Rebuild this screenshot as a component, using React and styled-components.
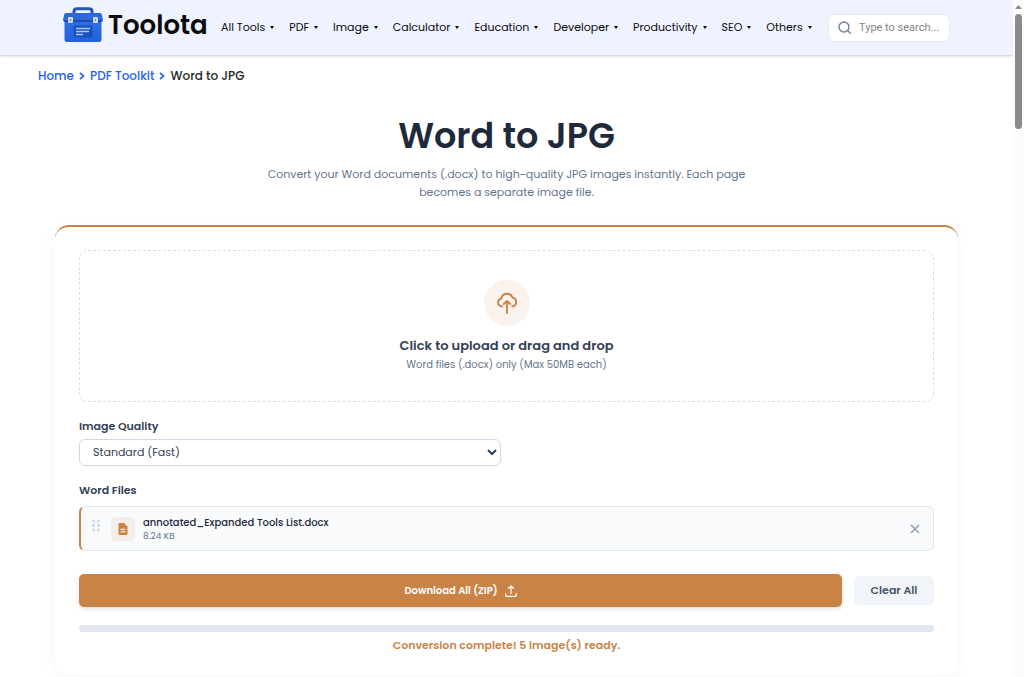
import React from "react";
import styled, { createGlobalStyle } from "styled-components";

const GlobalStyle = createGlobalStyle`
  * {
    box-sizing: border-box;
  }
  html {
    scrollbar-width: none;
  }
  body {
    margin: 0;
    background: #ffffff;
    color: #1e293b;
    font-family: Poppins, Inter, "Liberation Sans", sans-serif;
  }
  button, select {
    font-family: inherit;
  }
  h1, p {
    margin: 0;
  }
`;

const Shell = styled.div`
  display: grid;
  grid-template-columns: minmax(0, 1fr) 11px;
  min-height: 100vh;
`;

const Rail = styled.div`
  position: sticky;
  top: 0;
  height: 100vh;
  padding-top: 5px;
  display: flex;
  flex-direction: column;
  align-items: center;
  gap: 5px;
  background: #fcfcfc;
`;

const Thumb = styled.span`
  width: 7px;
  height: 115px;
  border-radius: 4px;
  background: #8b8b8b;
`;

const Header = styled.header`
  height: 56px;
  padding: 0 63px;
  display: flex;
  align-items: center;
  justify-content: space-between;
  background: #eff3ff;
  border-bottom: 1px solid #d5d9e4;
  box-shadow: 0 1px 2px rgba(0, 0, 0, 0.1);
`;

const Logo = styled.a`
  display: flex;
  align-items: center;
  gap: 5px;
  height: 50px;
  align-self: flex-start;
  color: #0b0b0b;
  font-size: 26px;
  font-weight: 600;
  line-height: 32px;
  text-decoration: none;
`;

const Nav = styled.nav`
  display: flex;
  gap: 15px;
  padding: 0 3px 1px 0;
`;

const NavButton = styled.button`
  display: flex;
  align-items: center;
  gap: 5px;
  padding: 0;
  border: none;
  background: none;
  color: #0a0a0a;
  font-size: 11px;
  line-height: 16px;

  &::after {
    content: "";
    border: 2px solid transparent;
    border-top: 3px solid #0a0a0a;
    border-bottom: 0;
  }
`;

const Search = styled.label`
  display: flex;
  align-items: center;
  gap: 8px;
  width: 122px;
  height: 28px;
  padding: 0 9px;
  border: 1px solid #e6eaf5;
  border-radius: 7px;
  background: #ffffff;

  svg {
    flex: none;
  }

  input {
    width: 100%;
    min-width: 0;
    padding: 0;
    border: none;
    outline: none;
    background: none;
    font-family: Roboto, sans-serif;
    font-size: 11px;
  }

  input::placeholder {
    color: #858585;
  }
`;

const Breadcrumb = styled.nav`
  display: flex;
  align-items: center;
  gap: 5px;
  padding: 11px 38px 0;
  font-size: 12px;
  font-weight: 500;
  line-height: 18px;
  color: #262626;

  a {
    color: #2563eb;
    text-decoration: none;
  }
`;

const Intro = styled.section`
  padding: 27px 55px 0;
  text-align: center;
`;

const Title = styled.h1`
  color: #1e293b;
  font-size: 35px;
  font-weight: 600;
  line-height: 48px;
`;

const Lead = styled.p`
  max-width: 500px;
  margin: 5px auto 0;
  color: #64748b;
  font-size: 11px;
  line-height: 18px;
`;

const Card = styled.section`
  margin: 24px 55px 2px;
  padding: 23px 24px 21px;
  border-top: 2px solid #c98346;
  border-radius: 14px;
  background: #ffffff;
  box-shadow: 0 4px 18px rgba(0, 0, 0, 0.04);
`;

const DropZone = styled.button`
  display: flex;
  flex-direction: column;
  align-items: center;
  width: 100%;
  height: 152px;
  padding: 29px 16px 0;
  border: 1px dashed #d8dfe8;
  border-radius: 9px;
  background: #ffffff;
`;

const UploadBadge = styled.span`
  display: grid;
  place-items: center;
  flex: none;
  width: 46px;
  height: 46px;
  margin-bottom: 10px;
  border-radius: 50%;
  background: #faf3ed;
`;

const DropTitle = styled.span`
  color: #334155;
  font-size: 13px;
  font-weight: 600;
  line-height: 20px;
`;

const DropHint = styled.span`
  color: #64748b;
  font-size: 10px;
  line-height: 18px;
`;

const Options = styled.div`
  display: grid;
  grid-template-columns: 1fr 1fr;
  gap: 12px;
  margin-top: 16px;
`;

const Label = styled.label`
  display: block;
  color: #334155;
  font-size: 11px;
  font-weight: 600;
  line-height: 16px;
`;

const Select = styled.select`
  width: 100%;
  height: 27px;
  margin-top: 5px;
  padding: 0 0 1px 9px;
  border: 1px solid #cfd9e5;
  border-radius: 6px;
  background: #ffffff;
  color: #334155;
  font-size: 11px;
`;

const FilesLabel = styled(Label)`
  margin-top: 16px;
`;

const FileRow = styled.div`
  display: flex;
  align-items: center;
  height: 45px;
  margin-top: 8px;
  padding: 0 13px 0 11px;
  border: 1px solid #e2e8f0;
  border-left: 2px solid #c98346;
  border-radius: 6px;
  background: #f8fafc;
`;

const Grip = styled.span`
  display: flex;
  padding-bottom: 6px;
`;

const FileBadge = styled.span`
  display: grid;
  place-items: center;
  width: 24px;
  height: 24px;
  margin: 0 8px 0 11px;
  border-radius: 5px;
  background: #f3eee9;
`;

const FileInfo = styled.div`
  flex: 1;
`;

const FileName = styled.p`
  color: #1e293b;
  font-size: 10px;
  font-weight: 500;
  line-height: 14px;
`;

const FileSize = styled.p`
  color: #64748b;
  font-size: 9px;
  line-height: 12px;
`;

const RemoveButton = styled.button`
  display: flex;
  padding: 0;
  border: none;
  background: none;
`;

const Actions = styled.div`
  display: flex;
  align-items: center;
  gap: 12px;
  margin-top: 23px;
`;

const Button = styled.button`
  display: flex;
  align-items: center;
  justify-content: center;
  gap: 7px;
  flex: ${(props) => (props.$primary ? "1" : "0 0 80px")};
  height: ${(props) => (props.$primary ? "33px" : "29px")};
  padding: 0;
  border: none;
  border-radius: 5px;
  background: ${(props) => (props.$primary ? "#c98346" : "#f1f5f9")};
  box-shadow: ${(props) =>
    props.$primary ? "0 2px 4px rgba(0, 0, 0, 0.12)" : "none"};
  color: ${(props) => (props.$primary ? "#ffffff" : "#475569")};
  font-size: ${(props) => (props.$primary ? "10px" : "11px")};
  font-weight: 600;
`;

const Progress = styled.div`
  height: 7px;
  margin-top: 18px;
  border-radius: 4px;
  background: #e2e8f0;
`;

const Status = styled.p`
  margin-top: 4px;
  color: #c98346;
  font-size: 11px;
  font-weight: 600;
  line-height: 18px;
  text-align: center;
`;

const menus = [
  "All Tools",
  "PDF",
  "Image",
  "Calculator",
  "Education",
  "Developer",
  "Productivity",
  "SEO",
  "Others",
];

const ToolboxIcon = () => (
  <svg width="40" height="36" viewBox="0 0 40 36" aria-hidden="true">
    <defs>
      <linearGradient id="box" x1="0" y1="0" x2="0" y2="1">
        <stop offset="0" stopColor="#2f6fe6" />
        <stop offset="1" stopColor="#2360dc" />
      </linearGradient>
    </defs>
    <path
      d="M11 8V4.500Q11 1.800 14 1.800H26Q29 1.800 29 4.500V8"
      fill="none"
      stroke="#2355b8"
      strokeWidth="3"
    />
    <rect x="1.500" y="13" width="37" height="22" rx="2.500" fill="url(#box)" />
    <path d="M3 6H37Q38.500 6 39 8L40 13Q40 14.500 38.500 14.500H1.500Q0 14.500 0 13L1 8Q1.500 6 3 6Z" fill="#2c68dc" />
    <path d="M1 13H39V15H1Z" fill="#1c4bb2" />
    <rect x="10.500" y="18.500" width="19" height="12" rx="2" fill="#1b4fc0" />
    <path d="M13 21.500H27M13 24.500H26M13 27.500H20" stroke="#a9c9ff" strokeWidth="1.300" />
    <rect x="5" y="10" width="5" height="6" rx="1" fill="#d5d9df" />
    <rect x="30" y="10" width="5" height="6" rx="1" fill="#d5d9df" />
    <path d="M7.500 12V14M32.500 12V14" stroke="#737c8c" strokeWidth="1.200" />
  </svg>
);

const SearchIcon = () => (
  <svg width="13" height="13" viewBox="0 0 13 13" fill="none" stroke="#71829d" strokeWidth="1.400" aria-hidden="true">
    <circle cx="6" cy="6" r="5" />
    <path d="M9.600 9.600L12.300 12.300" strokeLinecap="round" />
  </svg>
);

const Chevron = () => (
  <svg width="6" height="8" viewBox="0 0 6 8" fill="none" stroke="#2563eb" strokeWidth="1.700" aria-hidden="true">
    <path d="M1 0.800L4.500 4L1 7.200" />
  </svg>
);

const CloudIcon = () => (
  <svg width="20" height="22" viewBox="0 0 20 22" fill="none" stroke="#c98346" strokeWidth="1.900" strokeLinecap="round" strokeLinejoin="round" aria-hidden="true">
    <path d="M5.200 14.500A4 4 0 0 1 4.300 6.600A5.800 5.800 0 0 1 15.500 5.600A4.500 4.500 0 0 1 15.200 14.500" />
    <path d="M10 21V9.500M6.800 12L10 9L13.200 12" />
  </svg>
);

const UploadIcon = () => (
  <svg width="12" height="12" viewBox="0 0 12 12" fill="none" stroke="#ffffff" strokeWidth="1.200" strokeLinecap="round" strokeLinejoin="round" aria-hidden="true">
    <path d="M6 8.500V1M3.500 3.300L6 0.900L8.500 3.300M0.700 8.500V10.200Q0.700 11.300 1.800 11.300H10.200Q11.300 11.300 11.300 10.200V8.500" />
  </svg>
);

const GripIcon = () => (
  <svg width="8" height="13" viewBox="0 0 8 13" fill="#cbd5e1" aria-hidden="true">
    {[2, 6.5, 11].map((y) => (
      <React.Fragment key={y}>
        <circle cx="1.500" cy={y} r="1.400" />
        <circle cx="6.500" cy={y} r="1.400" />
      </React.Fragment>
    ))}
  </svg>
);

const FileIcon = () => (
  <svg width="10" height="12" viewBox="0 0 10 12" aria-hidden="true">
    <path d="M1.500 0H6L9.500 3.500V10.500Q9.500 12 8 12H1.500Q0.500 12 0.500 10.500V1.500Q0.500 0 1.500 0Z" fill="#c98346" />
    <path d="M2.500 6.300H7.500M2.500 8.800H7.500" stroke="#ffffff" strokeWidth="1" />
  </svg>
);

const CloseIcon = () => (
  <svg width="10" height="10" viewBox="0 0 10 10" stroke="#94a3b8" strokeWidth="1.700" aria-hidden="true">
    <path d="M1 1L9 9M9 1L1 9" />
  </svg>
);

export default function App() {
  return (
    <Shell>
      <GlobalStyle />
      <div>
        <Header>
          <Logo href="#">
            <ToolboxIcon />
            Toolota
          </Logo>
          <Nav>
            {menus.map((name) => (
              <NavButton key={name} type="button">
                {name}
              </NavButton>
            ))}
          </Nav>
          <Search>
            <SearchIcon />
            <input type="text" placeholder="Type to search..." aria-label="Search tools" />
          </Search>
        </Header>
        <Breadcrumb aria-label="Breadcrumb">
          <a href="#home">Home</a>
          <Chevron />
          <a href="#pdf">PDF Toolkit</a>
          <Chevron />
          <span>Word to JPG</span>
        </Breadcrumb>
        <main>
          <Intro>
            <Title>Word to JPG</Title>
            <Lead>
              Convert your Word documents (.docx) to high-quality JPG images
              instantly. Each page becomes a separate image file.
            </Lead>
          </Intro>
          <Card>
            <DropZone type="button">
              <UploadBadge>
                <CloudIcon />
              </UploadBadge>
              <DropTitle>Click to upload or drag and drop</DropTitle>
              <DropHint>Word files (.docx) only (Max 50MB each)</DropHint>
            </DropZone>
            <Options>
              <div>
                <Label htmlFor="quality">Image Quality</Label>
                <Select id="quality" defaultValue="standard">
                  <option value="standard">Standard (Fast)</option>
                </Select>
              </div>
            </Options>
            <FilesLabel as="p">Word Files</FilesLabel>
            <FileRow>
              <Grip>
                <GripIcon />
              </Grip>
              <FileBadge>
                <FileIcon />
              </FileBadge>
              <FileInfo>
                <FileName>annotated_Expanded Tools List.docx</FileName>
                <FileSize>8.24 KB</FileSize>
              </FileInfo>
              <RemoveButton type="button" aria-label="Remove file">
                <CloseIcon />
              </RemoveButton>
            </FileRow>
            <Actions>
              <Button type="button" $primary>
                Download All (ZIP)
                <UploadIcon />
              </Button>
              <Button type="button">Clear All</Button>
            </Actions>
            <Progress />
            <Status role="status">Conversion complete! 5 image(s) ready.</Status>
          </Card>
        </main>
      </div>
      <Rail aria-hidden="true">
        <svg width="7" height="4" viewBox="0 0 7 4">
          <path d="M0 4L3.500 0L7 4Z" fill="#8b8b8b" />
        </svg>
        <Thumb />
      </Rail>
    </Shell>
  );
}
